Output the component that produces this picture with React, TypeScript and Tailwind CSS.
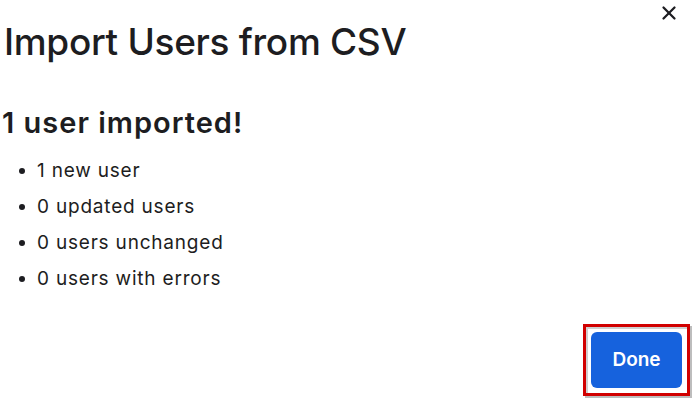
import { X } from "lucide-react";

const results = ["1 new user", "0 updated users", "0 users unchanged", "0 users with errors"];

export default function App() {
  return (
    <div
      className="relative flex h-[402px] w-[695px] flex-col bg-white text-[#1d1d21]"
      style={{ fontFamily: "Inter, 'Noto Sans', sans-serif" }}
    >
      <button className="absolute right-[15px] top-[2px] flex h-[22px] w-[22px] items-center justify-center text-[#1d1d21]">
        <X size={24} strokeWidth={2.5} />
      </button>

      <h1 className="pl-[4px] pt-[23px] text-[37px] font-medium leading-[37px] tracking-[-0.3px]">
        Import Users from CSV
      </h1>

      <h2 className="mt-[48px] pl-[2px] text-[29px] font-semibold leading-[29px] tracking-[1px]">
        1 user imported!
      </h2>

      <ul className="mt-[16px] flex flex-col">
        {results.map((r) => (
          <li key={r} className="flex items-center text-[19px] leading-[36px] tracking-[0.8px]">
            <span className="ml-[19px] h-[6px] w-[6px] rounded-full bg-[#1d1d21]" />
            <span className="ml-[12px]">{r}</span>
          </li>
        ))}
      </ul>

      <div className="mt-auto mb-[6px] mr-[5px] flex justify-end">
        <div className="border-[3px] border-[#d10000] p-[5px] shadow-[2px_2px_0_#bdbdbd,inset_2px_2px_0_#cfcfcf]">
          <button className="flex h-[56px] w-[91px] items-center justify-center rounded-[6px] bg-[#1662dd] text-[19px] font-semibold text-white">
            Done
          </button>
        </div>
      </div>
    </div>
  );
}
